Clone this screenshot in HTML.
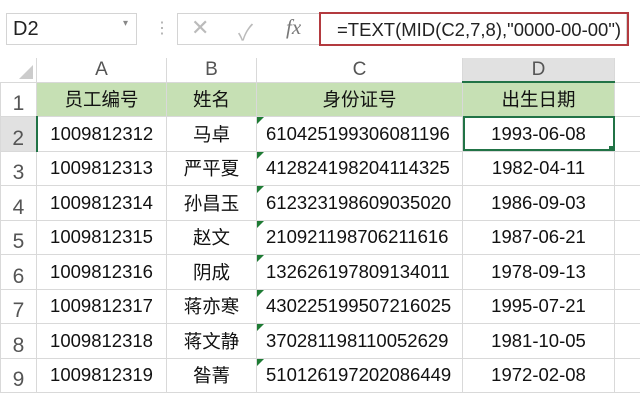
<!DOCTYPE html>
<html><head><meta charset="utf-8"><style>
body{margin:0;width:640px;height:400px;overflow:hidden;background:#fff;font-family:"Liberation Sans","Noto Sans CJK SC",sans-serif;position:relative}
.a{position:absolute;box-sizing:border-box}
table{position:absolute;left:0;top:58px;border-collapse:collapse;table-layout:fixed;width:660px}
td{border:1px solid #d9d9d9;padding:0;font-size:18.5px;color:#111;text-align:center;overflow:hidden;white-space:nowrap;position:relative}
td.rh{background:#fff;color:#555;font-size:21px;vertical-align:bottom;text-align:center;border-color:#d9d9d9;padding-bottom:0}
tr.h td{background:#fff;color:#555;font-size:19px;height:23px;border-top:none}
tr.g td:not(.rh){background:#c6e0b4}
td.c{text-align:left;padding-left:9px}
td.c::before{content:"";position:absolute;left:0;top:0;border-top:7px solid #1e7b34;border-right:7px solid transparent}
tr.g td.c::before{display:none}
</style></head><body>
<div class="a" style="left:6px;top:13px;width:131px;height:32px;border:1px solid #d4d4d4;font-size:20px;padding:4px 0 0 6px;color:#222">D2<span style="position:absolute;right:8px;top:4px;font-size:10px;color:#888">▾</span></div>
<div class="a" style="left:154px;top:18px;color:#aaa;font-size:16px">⋮</div>
<div class="a" style="left:177px;top:13px;width:450px;height:32px;border:1px solid #d4d4d4"></div>
<div class="a" style="left:191px;top:15px;font-size:22px;color:#bbb">✕</div>
<div class="a" style="left:238px;top:15px;font-size:22px;color:#bbb">✓</div>
<div class="a" style="left:286px;top:15px;font-size:21px;color:#777;font-style:italic;font-family:'Liberation Serif',serif">fx</div>
<div class="a" style="left:319px;top:12px;width:310px;height:34px;border:2px solid #b33a3f;font-size:18.5px;padding:5px 0 0 16px;color:#222;white-space:nowrap;overflow:hidden">=TEXT(MID(C2,7,8),"0000-00-00")</div>
<table>
<colgroup><col style="width:36px"><col style="width:130px"><col style="width:90px"><col style="width:206px"><col style="width:152px"><col style="width:46px"></colgroup>
<tr class="h"><td class="rh" style="border-left:none;vertical-align:middle;padding:0"><div style="position:absolute;right:3px;bottom:3px;border-bottom:14px solid #ccc;border-left:14px solid transparent"></div></td><td>A</td><td>B</td><td>C</td><td style="background:#e1e1e1;border-bottom:2px solid #217346">D</td><td style="border-right:none"></td></tr>
<tr class="g" style="height:34px"><td class="rh">1</td><td>员工编号</td><td>姓名</td><td>身份证号</td><td>出生日期</td><td style="background:#fff"></td></tr>
<tr style="height:35px"><td class="rh" style="background:#e1e1e1;border-right:2px solid #217346">2</td><td>1009812312</td><td>马卓</td><td class="c">610425199306081196</td><td style="outline:2px solid #217346;outline-offset:-2px">1993-06-08<div style="position:absolute;right:-1px;bottom:-1px;width:6px;height:6px;background:#217346"></div></td><td></td></tr>
<tr style="height:34px"><td class="rh">3</td><td>1009812313</td><td>严平夏</td><td class="c">412824198204114325</td><td>1982-04-11</td><td></td></tr>
<tr style="height:35px"><td class="rh">4</td><td>1009812314</td><td>孙昌玉</td><td class="c">612323198609035020</td><td>1986-09-03</td><td></td></tr>
<tr style="height:34px"><td class="rh">5</td><td>1009812315</td><td>赵文</td><td class="c">210921198706211616</td><td>1987-06-21</td><td></td></tr>
<tr style="height:35px"><td class="rh">6</td><td>1009812316</td><td>阴成</td><td class="c">132626197809134011</td><td>1978-09-13</td><td></td></tr>
<tr style="height:34px"><td class="rh">7</td><td>1009812317</td><td>蒋亦寒</td><td class="c">430225199507216025</td><td>1995-07-21</td><td></td></tr>
<tr style="height:35px"><td class="rh">8</td><td>1009812318</td><td>蒋文静</td><td class="c">370281198110052629</td><td>1981-10-05</td><td></td></tr>
<tr style="height:34px"><td class="rh">9</td><td>1009812319</td><td>昝菁</td><td class="c">510126197202086449</td><td>1972-02-08</td><td></td></tr>
</table>
</body></html>
